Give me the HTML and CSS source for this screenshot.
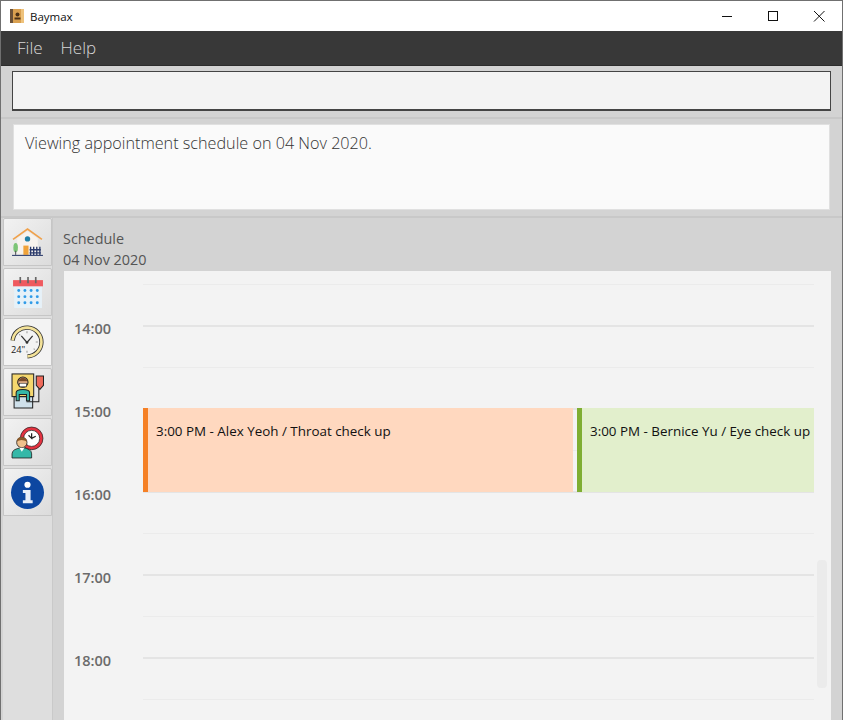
FILE: index.html
```html
<!DOCTYPE html>
<html lang="en">

<head>
    <meta charset="UTF-8">
    <meta name="viewport" content="width=device-width, initial-scale=1.0">
    <title>Baymax</title>
    <link rel="stylesheet" href="styles.css">
</head>

<body>
    <div class="window">
        <div class="titlebar">
            <svg class="app-icon" viewBox="0 0 14 14">
                <rect x="0" y="0" width="14" height="14" fill="#d9a050"/>
                <rect x="0" y="0" width="3" height="14" fill="#6b5138"/>
                <rect x="11" y="0" width="3" height="14" fill="#eec27c"/>
                <circle cx="7.5" cy="5.5" r="2" fill="#4b3016"/>
                <rect x="4.5" y="8.5" width="6" height="2" fill="#4b3016"/>
            </svg>
            <span class="app-name">Baymax</span>
            <div class="caption">
                <svg class="caption-btn" viewBox="0 0 12 12"><path d="M1 6.5H11" stroke="#111" fill="none"/></svg>
                <svg class="caption-btn" viewBox="0 0 12 12"><rect x="1.5" y="1.5" width="9" height="9" stroke="#111" fill="none"/></svg>
                <svg class="caption-btn" viewBox="0 0 12 12"><path d="M1 1L11.5 11.5M11.5 1L1 11.5" stroke="#111" fill="none"/></svg>
            </div>
        </div>

        <div class="menubar">
            <span class="menu-item">File</span>
            <span class="menu-item">Help</span>
        </div>

        <div class="command-pane">
            <div class="command-box"></div>
        </div>

        <div class="result-pane">
            <div class="result-box">Viewing appointment schedule on 04 Nov 2020.</div>
        </div>

        <div class="main">
            <div class="sidebar">
                <div class="tab">
                    <svg class="tab-icon" viewBox="0 0 32 32">
                        <path d="M6 12L16 5L26 12V27H6Z" fill="#f7f3ee"/>
                        <path d="M2 13L16 3L30 13" stroke="#f0a14a" stroke-width="1.6" fill="none"/>
                        <circle cx="16" cy="12.500" r="2.600" fill="#1f7fa8"/>
                        <rect x="12" y="19" width="5" height="9" fill="#f0a238"/>
                        <ellipse cx="4.500" cy="21" rx="2.200" ry="4.500" fill="#7cc576"/>
                        <rect x="4" y="24" width="1" height="4" fill="#555"/>
                        <path d="M19 28V20M22 28V20M25 28V20M28 28V20M18 23H29M18 26H29" stroke="#2a3a6b" stroke-width="1.300"/>
                        <path d="M1 28.500H31" stroke="#2a3a6b" stroke-width="1"/>
                    </svg>
                </div>
                <div class="tab">
                    <svg class="tab-icon" viewBox="0 0 32 32">
                        <rect x="3" y="5" width="27" height="26" fill="#e6f1f8"/>
                        <rect x="2" y="4" width="29" height="6" fill="#ef5a5f"/>
                        <path d="M9 1V7M16.500 1V7M24 1V7" stroke="#666" stroke-width="1.600"/>
                        <g fill="#2f9be8">
                            <circle cx="7.500" cy="14" r="1.400"/><circle cx="13.500" cy="14" r="1.400"/><circle cx="19.500" cy="14" r="1.400"/><circle cx="25.500" cy="14" r="1.400"/>
                            <circle cx="7.500" cy="20" r="1.400"/><circle cx="13.500" cy="20" r="1.400"/><circle cx="19.500" cy="20" r="1.400"/><circle cx="25.500" cy="20" r="1.400"/>
                            <circle cx="7.500" cy="26" r="1.400"/><circle cx="13.500" cy="26" r="1.400"/><circle cx="19.500" cy="26" r="1.400"/><circle cx="25.500" cy="26" r="1.400"/>
                        </g>
                    </svg>
                </div>
                <div class="tab tab-active">
                    <svg class="tab-icon" viewBox="0 0 32 32">
                        <path d="M1.600 14A14 14 0 1 1 16 29.500" stroke="#333" stroke-width="4.200" fill="none"/>
                        <path d="M1.600 14A14 14 0 1 1 16 29.500" stroke="#f4e39a" stroke-width="2.600" fill="none"/>
                        <path d="M10 9.500L15.500 16L21 9.500" stroke="#333" stroke-width="1.200" fill="none"/>
                        <path d="M15.500 5V7M26 15.500H24M8 8L9 9M23 23L22 22M15.500 26V24" stroke="#999" stroke-width="1"/>
                        <circle cx="15.500" cy="16" r="1.300" fill="#333"/>
                        <text class="clock-text" x="0" y="26">24"</text>
                    </svg>
                </div>
                <div class="tab">
                    <svg class="tab-icon" viewBox="0 0 32 32">
                        <rect x="1" y="-2" width="21" height="22" fill="#f5d76e" stroke="#222"/>
                        <path d="M3 20H21V31H3Z" fill="#cfe0ea" stroke="#222"/>
                        <circle cx="11.500" cy="6" r="5" fill="#e8b48c" stroke="#222"/>
                        <path d="M6.500 5Q11.500 -2 16.500 5Z" fill="#7a4a2a"/>
                        <rect x="8" y="7" width="7" height="3.500" fill="#fff" stroke="#222" stroke-width=".6"/>
                        <path d="M5 24V16Q5 13 11.500 13Q18 13 18 16V24H15V18H8V24Z" fill="#35b8a8" stroke="#222"/>
                        <path d="M15 25H27V12" stroke="#222" fill="none"/>
                        <path d="M24.500 0H31.500V9L28 13L24.500 9Z" fill="#ef6b5b" stroke="#222"/>
                    </svg>
                </div>
                <div class="tab">
                    <svg class="tab-icon" viewBox="0 0 32 32">
                        <circle cx="20" cy="12" r="11" fill="#e53240" stroke="#222" stroke-width=".7"/>
                        <circle cx="20" cy="12" r="7.800" fill="#fff" stroke="#222" stroke-width=".7"/>
                        <path d="M20 7V12L17 9M20 12L24 10" stroke="#222" stroke-width="1.200" fill="none"/>
                        <path d="M1 31V27Q1 22 11 21Q20 22 20 27V31Z" fill="#35b8a8" stroke="#222" stroke-width=".8"/>
                        <circle cx="10.500" cy="16" r="5" fill="#f0c08c" stroke="#222" stroke-width=".8"/>
                        <path d="M5.500 15Q6 10 11 11Q15 11 15.500 15Q10 12 5.500 15Z" fill="#8a5a2b"/>
                        <path d="M8 21L10.500 25L13 21Z" fill="#fff"/>
                    </svg>
                </div>
                <div class="tab">
                    <svg class="tab-icon" viewBox="0 0 32 32">
                        <circle cx="16" cy="16" r="16" fill="#0d47a1"/>
                        <circle cx="16" cy="8.500" r="3" fill="#fff"/>
                        <path d="M11.500 13.500H19V23.500H21V26.500H11.500V23.500H14V16.500H11.500Z" fill="#e8eef8"/>
                    </svg>
                </div>
            </div>

            <div class="schedule">
                <div class="schedule-title">Schedule<br>04 Nov 2020</div>
                <div class="calendar">
                    <div class="slot slot-first"><span class="time"></span><span class="line"></span></div>
                    <div class="slot slot-hour"><span class="time">14:00</span><span class="line"></span></div>
                    <div class="slot"><span class="time"></span><span class="line"></span></div>
                    <div class="slot slot-hour"><span class="time">15:00</span><span class="line"></span></div>
                    <div class="slot"><span class="time"></span><span class="line"></span></div>
                    <div class="slot slot-hour"><span class="time">16:00</span><span class="line"></span></div>
                    <div class="slot"><span class="time"></span><span class="line"></span></div>
                    <div class="slot slot-hour"><span class="time">17:00</span><span class="line"></span></div>
                    <div class="slot"><span class="time"></span><span class="line"></span></div>
                    <div class="slot slot-hour"><span class="time">18:00</span><span class="line"></span></div>
                    <div class="slot"><span class="time"></span><span class="line"></span></div>

                    <div class="events">
                        <div class="event event-orange">3:00 PM - Alex Yeoh / Throat check up</div>
                        <div class="event event-green">3:00 PM - Bernice Yu / Eye check up</div>
                    </div>
                    <div class="scroll-thumb"></div>
                </div>
            </div>
        </div>
    </div>
</body>

</html>
```

FILE: styles.css
```css
html,
body {
    margin: 0;
    height: 100%;
    overflow: hidden;
}

.window {
    height: 720px;
    display: flex;
    flex-direction: column;
    box-sizing: border-box;
    border: 1px solid #707070;
    border-bottom: 0;
    background-color: #d3d3d3;
    font-family: "Open Sans", "Liberation Sans", sans-serif;
}

.titlebar {
    height: 30px;
    background-color: #fff;
    display: flex;
    align-items: center;
    padding-left: 9px;
}

.app-icon {
    width: 14px;
    height: 14px;
}

.app-name {
    margin-left: 6px;
    font-size: 11.5px;
    color: #111;
}

.caption {
    margin-left: auto;
    display: flex;
    align-items: center;
    padding-right: 17px;
    gap: 34px;
}

.caption-btn {
    width: 12px;
    height: 12px;
}

.menubar {
    height: 35px;
    background-color: #383838;
    display: flex;
    align-items: center;
    padding: 0 0 2px 16px;
    gap: 18px;
    border-bottom: 1px solid #2c2c2c;
    box-sizing: border-box;
}

.menu-item {
    font-size: 17px;
    font-weight: 300;
    color: #d8d8d8;
}

.command-pane {
    height: 53px;
    box-sizing: border-box;
    padding: 5px 11px 6px;
    border-bottom: 2px solid #c8c8c8;
}

.command-box {
    height: 100%;
    box-sizing: border-box;
    border: 1px solid #444;
    border-bottom-width: 2px;
    background-color: #f3f3f3;
}

.result-pane {
    height: 99px;
    box-sizing: border-box;
    padding: 5px 12px 6px;
    border-bottom: 2px solid #c8c8c8;
}

.result-box {
    height: 100%;
    box-sizing: border-box;
    padding: 7px 11px;
    background-color: #fafafa;
    border: 1px solid #e0e0e0;
    font-size: 16.2px;
    font-weight: 300;
    line-height: 22px;
    color: #333;
}

.main {
    flex: 1;
    display: flex;
    min-height: 0;
    padding-left: 2px;
}

.sidebar {
    width: 50px;
    box-sizing: border-box;
    background-color: #dedede;
    border-right: 1px solid #c9c9c9;
    display: flex;
    flex-direction: column;
    gap: 2px;
}

.tab {
    height: 48px;
    box-sizing: border-box;
    border: 1px solid #c6c6c6;
    border-radius: 2px 2px 0 0;
    background: linear-gradient(135deg, #f2f2f2, #dcdcdc);
    display: flex;
    align-items: center;
    justify-content: center;
}

.tab-active {
    background: #f3f3f3;
}

.tab-icon {
    width: 33px;
    height: 33px;
    overflow: visible;
}

.clock-text {
    font-size: 9px;
    fill: #222;
}

.schedule {
    flex: 1;
    min-width: 0;
    padding: 10px 11px 0 11px;
    display: flex;
    flex-direction: column;
}

.schedule-title {
    font-size: 14.4px;
    line-height: 21px;
    color: #555;
    margin-left: -1px;
    margin-bottom: 1px;
}

.calendar {
    flex: 1;
    position: relative;
    overflow: hidden;
    background-color: #f3f3f3;
    padding-top: 12.5px;
}

.slot {
    height: 41.5px;
    display: flex;
    align-items: flex-start;
}

.time {
    width: 79px;
    box-sizing: border-box;
    padding-left: 10px;
    margin-top: -6px;
    font-size: 14.5px;
    font-weight: 600;
    line-height: 20px;
    color: #6b6b6b;
}

.line {
    width: 671px;
    height: 1px;
    background-color: #ebebeb;
}

.slot-hour .line {
    height: 2px;
    background-color: #e4e4e4;
}

.events {
    position: absolute;
    top: 137px;
    left: 79px;
    width: 671px;
    height: 84px;
    display: flex;
    gap: 4px;
}

.event {
    box-sizing: border-box;
    padding: 14px 0 0 8px;
    font-size: 13.4px;
    line-height: 18px;
    color: #111;
    white-space: nowrap;
    overflow: hidden;
}

.event-orange {
    width: 430px;
    background-color: #ffd8bf;
    border-left: 5px solid #f58025;
}

.event-green {
    flex: 1;
    background-color: #e2efcc;
    border-left: 5px solid #7fae32;
}

.scroll-thumb {
    position: absolute;
    top: 289px;
    left: 753px;
    width: 10px;
    height: 128px;
    border-radius: 4px;
    background-color: #ebebeb;
}
```
